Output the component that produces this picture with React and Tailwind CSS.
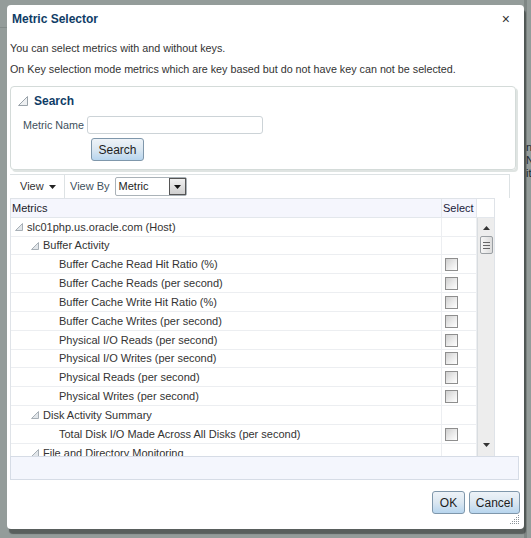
import React from "react";

const rows = [
  { label: "slc01php.us.oracle.com (Host)", level: 0, group: true, h: "h-[19px]" },
  { label: "Buffer Activity", level: 1, group: true, h: "h-[18px]" },
  { label: "Buffer Cache Read Hit Ratio (%)", level: 2, h: "h-[19px]" },
  { label: "Buffer Cache Reads (per second)", level: 2, h: "h-[19px]" },
  { label: "Buffer Cache Write Hit Ratio (%)", level: 2, h: "h-[19px]" },
  { label: "Buffer Cache Writes (per second)", level: 2, h: "h-[19px]" },
  { label: "Physical I/O Reads (per second)", level: 2, h: "h-[19px]" },
  { label: "Physical I/O Writes (per second)", level: 2, h: "h-[18px]" },
  { label: "Physical Reads (per second)", level: 2, h: "h-[19px]" },
  { label: "Physical Writes (per second)", level: 2, h: "h-[19px]" },
  { label: "Disk Activity Summary", level: 1, group: true, h: "h-[19px]" },
  { label: "Total Disk I/O Made Across All Disks (per second)", level: 2, h: "h-[19px]" },
  { label: "File and Directory Monitoring", level: 1, group: true, h: "h-[19px]" },
];

const indent = ["pl-[4px]", "pl-[20px]", "pl-[48px]"];

function TreeTri() {
  return (
    <svg width="8" height="8" viewBox="0 0 8 8" className="shrink-0">
      <polygon points="0.5,7.5 7.5,7.5 7.5,0.5" fill="#e2e6ea" stroke="#a7afb6" strokeWidth="1" />
    </svg>
  );
}

function Checkbox() {
  return (
    <div className="w-[13px] h-[13px] border border-[#8e8e8e] bg-gradient-to-br from-[#cfcfcf] via-[#e9e9e9] to-white" />
  );
}

function Button({ children, w }) {
  return (
    <div
      className={`${w} h-[23px] flex items-center justify-center rounded-[3px] border border-[#7f97ab] bg-gradient-to-b from-[#eef3f8] via-[#dbe7f1] to-[#b7d5ee] text-[12px] text-[#1d1d1d]`}
    >
      {children}
    </div>
  );
}

export default function App() {
  return (
    <div className="relative w-[531px] h-[538px] bg-[#949c9a] overflow-hidden font-['Liberation_Sans',Arial,sans-serif]">
      {/* page behind the overlay */}
      <div className="absolute left-0 top-[27px] w-[7px] h-px bg-[#838b89]" />
      <div className="absolute left-[524px] top-0 w-[3px] h-[538px] bg-[#7f8785]" />
      <div className="absolute left-[526px] top-[141px] text-[11px] leading-[13px] text-[#1e2a30]">
        <div>nd</div>
        <div>Ni</div>
        <div>it</div>
      </div>

      <div className="pl-[7px] pt-[5px]">
        <div className="relative w-[517px] h-[524px] bg-white rounded-[4px] shadow-[2px_5px_1px_rgba(40,45,44,0.55)] flex flex-col">
          {/* title */}
          <div className="h-[28px] flex items-center justify-between pl-[5px] pr-[14px]">
            <span className="text-[12px] font-bold text-[#0f3c66]">Metric Selector</span>
            <span className="text-[14px] text-[#333] leading-none">×</span>
          </div>

          {/* info text */}
          <div className="mt-[5px] pl-[3px] text-[10.75px] text-[#333]">
            <div className="h-[21px] flex items-center">You can select metrics with and without keys.</div>
            <div className="h-[21px] flex items-center">
              On Key selection mode metrics which are key based but do not have key can not be selected.
            </div>
          </div>

          {/* search panel */}
          <div className="mt-[6px] ml-[3px] w-[506px] h-[84px] rounded-[4px] border border-[#d4dbd9] shadow-[2px_2px_0_#dfe4e2] flex flex-col">
            <div className="h-[26px] flex items-center pl-[7px] pt-[2px] gap-[6px]">
              <svg width="10" height="10" viewBox="0 0 10 10">
                <polygon points="0.5,9.5 9.5,9.5 9.5,0.5" fill="#eef0f2" stroke="#9aa3aa" strokeWidth="1" />
              </svg>
              <span className="text-[12px] font-bold text-[#0f3c66]">Search</span>
            </div>
            <div className="mt-[3px] flex items-center h-[18px]">
              <span className="pl-[12px] w-[76px] text-[10.75px] text-[#40505c]">Metric Name</span>
              <div className="w-[176px] h-[18px] rounded-[3px] border border-[#ccd3d7] bg-white" />
            </div>
            <div className="mt-[4px] pl-[80px]">
              <Button w="w-[53px]">Search</Button>
            </div>
          </div>

          {/* toolbar */}
          <div className="mt-[4px] ml-[3px] w-[500px] h-[24px] border-t border-r border-[#dde2e4] flex items-stretch text-[11px] text-[#333]">
            <div className="w-[55px] flex items-center pl-[10px] gap-[5px] border-r border-[#dde2e4]">
              <span>View</span>
              <svg width="7" height="4" viewBox="0 0 7 4">
                <polygon points="0,0 7,0 3.5,4" fill="#222" />
              </svg>
            </div>
            <div className="flex items-center pl-[5px] gap-[5px]">
              <span className="text-[#40505c]">View By</span>
              <div className="w-[72px] h-[19px] border border-[#aab2b8] rounded-[2px] flex items-stretch bg-white">
                <span className="flex-1 flex items-center pl-[3px] text-[#222]">Metric</span>
                <div className="w-[17px] border border-[#555] bg-gradient-to-b from-[#f0f0f0] to-[#cfcfcf] flex items-center justify-center">
                  <svg width="7" height="4" viewBox="0 0 7 4">
                    <polygon points="0,0 7,0 3.5,4" fill="#111" />
                  </svg>
                </div>
              </div>
            </div>
          </div>

          {/* table */}
          <div className="ml-[3px] w-[485px] border-t border-l border-r border-[#dfe3e8] text-[11px] text-[#333]">
            <div className="flex h-[19px] border-b border-[#e3e7ec]">
              <div className="w-[430px] bg-[#f5f6fd] flex items-center pl-[1px] text-[#1a1a2a]">Metrics</div>
              <div className="w-[36px] bg-[#f5f6fd] border-l border-[#e3e7ec] border-r flex items-center pl-[1px] text-[#1a1a3a]">
                Select
              </div>
              <div className="flex-1" />
            </div>
            <div className="flex h-[238px]">
              <div className="w-[466px] overflow-hidden">
                {rows.map((r, i) => (
                  <div key={i} className={`flex ${r.h} border-b border-[#eceef1]`}>
                    <div className={`w-[430px] flex items-center gap-[4px] ${indent[r.level]}`}>
                      {r.group && <TreeTri />}
                      <span className="whitespace-nowrap">{r.label}</span>
                    </div>
                    <div className="w-[36px] border-l border-r border-[#eceef1] flex items-center pl-[3px]">
                      {!r.group && <Checkbox />}
                    </div>
                  </div>
                ))}
              </div>
              {/* scrollbar */}
              <div className="flex-1 bg-[#ededed] border-l border-[#d9dde0] flex flex-col items-center">
                <div className="h-[18px] flex items-center justify-center pt-[2px]">
                  <svg width="7" height="4" viewBox="0 0 7 4">
                    <polygon points="3.5,0 7,4 0,4" fill="#333" />
                  </svg>
                </div>
                <div className="w-[13px] h-[18px] border border-[#9a9fa3] rounded-[2px] bg-gradient-to-r from-[#f6f6f6] to-[#dcdcdc] flex flex-col items-center justify-center gap-[2px]">
                  <div className="w-[7px] h-px bg-[#666]" />
                  <div className="w-[7px] h-px bg-[#666]" />
                  <div className="w-[7px] h-px bg-[#666]" />
                </div>
                <div className="flex-1" />
                <div className="h-[14px] flex items-start justify-center pt-[1px]">
                  <svg width="7" height="4" viewBox="0 0 7 4">
                    <polygon points="0,0 7,0 3.5,4" fill="#333" />
                  </svg>
                </div>
              </div>
            </div>
          </div>

          {/* footer bar */}
          <div className="ml-[3px] w-[509px] h-[24px] bg-[#f4f6fd] border border-[#d6dce6]" />

          {/* buttons */}
          <div className="mt-[11px] flex justify-end gap-[4px] pr-[4px]">
            <Button w="w-[33px]">OK</Button>
            <Button w="w-[51px]">Cancel</Button>
          </div>

          {/* resize grip */}
          <svg className="absolute right-[4px] bottom-[4px]" width="10" height="10" viewBox="0 0 10 10">
            {[
              [8, 0], [8, 2], [6, 2], [8, 4], [6, 4], [4, 4], [8, 6], [6, 6], [4, 6], [2, 6], [8, 8], [6, 8], [4, 8], [2, 8], [0, 8],
            ].map(([x, y], i) => (
              <rect key={i} x={x} y={y} width="1" height="1" fill="#8a9298" />
            ))}
          </svg>
        </div>
      </div>
    </div>
  );
}
